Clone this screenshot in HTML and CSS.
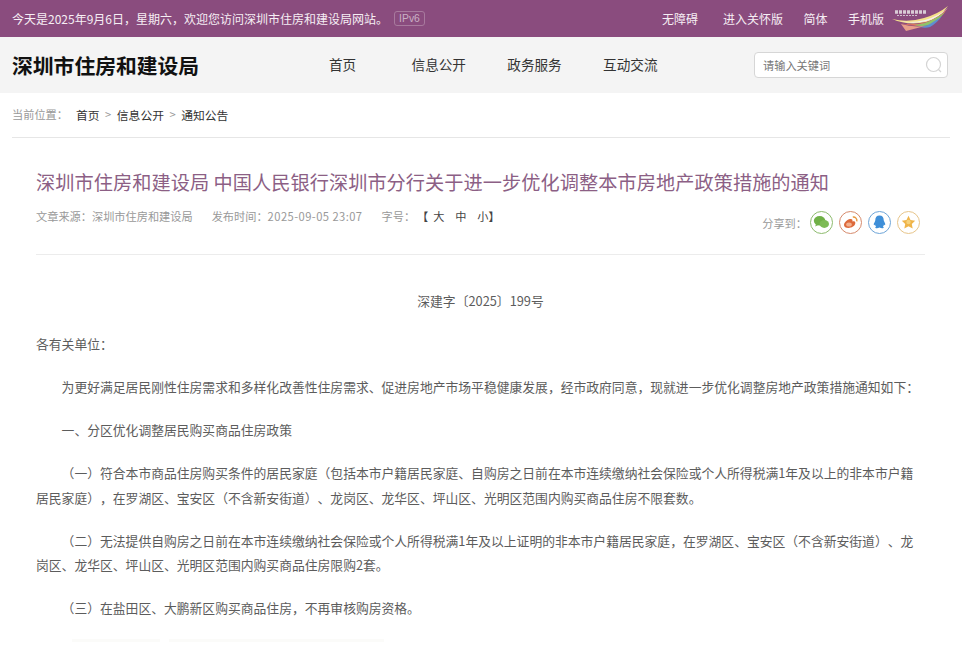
FILE: index.html
```html
<!DOCTYPE html>
<html lang="zh-CN">
<head>
<meta charset="utf-8">
<title>深圳市住房和建设局</title>
<link rel="stylesheet" href="styles.css">
</head>
<body>
<div class="topbar">
  <div class="welcome"><span>今天是2025年9月6日，星期六，欢迎您访问深圳市住房和建设局网站。</span><span class="ipv6">IPv6</span></div>
  <div class="toplinks">
    <a>无障碍</a><a>进入关怀版</a><a>简体</a><a>手机版</a>
    <svg class="wing" width="57" height="27" viewBox="0 0 57 27">
      <path d="M3 7h31" stroke="#d9cbd6" stroke-width="3.500" stroke-dasharray="3 1"/>
      <path d="M5 10.500h20" stroke="#cfc0cd" stroke-width="1" stroke-dasharray="2 1"/>
      <path d="M0 14 Q16 18 32 13 Q46 9 56 1 Q48 13 34 17 Q16 21 0 14Z" fill="#f4e08a"/>
      <path d="M3 15 Q17 19 33 15 Q47 11 56 3 Q48 12 35 16 Q20 20 3 15Z" fill="#f2f0f0"/>
      <path d="M7 18 Q20 21 35 17 Q46 13 55 4 Q49 14 37 19 Q24 23 7 18Z" fill="#e5745f"/>
      <path d="M22 20 Q33 19 40 15 Q48 11 53 7 Q47 15 38 20 Q30 22 22 20Z" fill="#8fc46a"/>
      <path d="M28 22 Q36 21 41 17 Q46 14 50 11 Q45 18 38 22 Q33 23.500 28 22Z" fill="#5f8fd0"/>
      <path d="M9 19 L14 26 L33 21 Q20 22.500 9 19Z" fill="#e8a08a"/>
    </svg>
  </div>
</div>
<header class="mainhead">
  <div class="site">深圳市住房和建设局</div>
  <nav class="nav"><a>首页</a><a>信息公开</a><a>政务服务</a><a>互动交流</a></nav>
  <div class="search">
    <span>请输入关键词</span>
    <svg width="18" height="18" viewBox="0 0 18 18"><circle cx="8.500" cy="8.500" r="7" fill="none" stroke="#d4d4d4" stroke-width="1.200"/><path d="M13.500 13.500l2.500 2.500" stroke="#d4d4d4" stroke-width="1.200"/></svg>
  </div>
</header>
<div class="crumbs">
  <span class="here">当前位置：</span><a>首页</a><i>&gt;</i><a>信息公开</a><i>&gt;</i><a>通知公告</a>
</div>
<main class="article">
  <h1>深圳市住房和建设局 中国人民银行深圳市分行关于进一步优化调整本市房地产政策措施的通知</h1>
  <div class="meta">
    <div class="info">
      <span>文章来源：深圳市住房和建设局</span>
      <span>发布时间：<span class="date">2025-09-05 23:07</span></span>
      <span class="sizeline">字号：<span class="sizes"><b class="open">【</b><b>大</b><b>中</b><b>小</b><b class="close">】</b></span></span>
    </div>
    <div class="share">
      <span>分享到：</span>
      <a class="ic green"><svg width="17" height="17" viewBox="0 0 17 17"><ellipse cx="6.600" cy="6.800" rx="5.800" ry="4.800" fill="#6fb046"/><path d="M3 10l-.8 2.500 3-1.500z" fill="#6fb046"/><ellipse cx="11.300" cy="10" rx="4.700" ry="3.900" fill="#7dbb55"/></svg></a>
      <a class="ic red"><svg width="17" height="17" viewBox="0 0 17 17"><path d="M2 11c0-2.500 3.200-5.500 6-6 2.500-.4 2.800 1.200 2.300 2.500 1.800-.5 3.200.1 3 1.800-.3 2.700-3.700 4.700-6.800 4.700C3.800 14 2 12.800 2 11z" fill="#dd6a3c"/><ellipse cx="7" cy="10.500" rx="2.800" ry="2" fill="#f3b18f"/><path d="M10.800 3a3.600 3.600 0 0 1 4 4.400" fill="none" stroke="#e9973d" stroke-width="1.400"/></svg></a>
      <a class="ic blue"><svg width="17" height="17" viewBox="0 0 17 17"><path d="M8.500 1.500c2.900 0 4.200 2.100 4.200 4.500 0 1 .9 2 1.400 3.600.4 1.600-.3 2.100-1.200 1 0 .9-.4 1.600-1 2.100.9.300 1.100 1 .5 1.300-1.100.4-2.600.2-3.900-.4-1.300.6-2.800.8-3.900.4-.6-.3-.4-1 .5-1.300-.6-.5-1-1.200-1-2.100-.9 1.100-1.600.6-1.200-1C3.800 8 4.300 7 4.300 6c0-2.400 1.300-4.500 4.200-4.500z" fill="#3f8fd8"/></svg></a>
      <a class="ic gold"><svg width="17" height="17" viewBox="0 0 17 17"><path d="M8.500 1.800l2 4.300 4.700.6-3.400 3.200.9 4.600-4.200-2.300-4.200 2.300.9-4.600L1.800 6.700l4.700-.6z" fill="#efb449"/><circle cx="8.500" cy="8" r="2.200" fill="#f6d27c"/></svg></a>
    </div>
  </div>
  <div class="body">
    <p class="center">深建字〔2025〕199号</p>
    <p>各有关单位：</p>
    <p class="ind">为更好满足居民刚性住房需求和多样化改善性住房需求、促进房地产市场平稳健康发展，经市政府同意，现就进一步优化调整房地产政策措施通知如下：</p>
    <p class="ind">一、分区优化调整居民购买商品住房政策</p>
    <p class="ind">（一）符合本市商品住房购买条件的居民家庭（包括本市户籍居民家庭、自购房之日前在本市连续缴纳社会保险或个人所得税满1年及以上的非本市户籍居民家庭），在罗湖区、宝安区（不含新安街道）、龙岗区、龙华区、坪山区、光明区范围内购买商品住房不限套数。</p>
    <p class="ind">（二）无法提供自购房之日前在本市连续缴纳社会保险或个人所得税满1年及以上证明的非本市户籍居民家庭，在罗湖区、宝安区（不含新安街道）、龙岗区、龙华区、坪山区、光明区范围内购买商品住房限购2套。</p>
    <p class="ind">（三）在盐田区、大鹏新区购买商品住房，不再审核购房资格。</p>
    <div class="trace"><span></span><span></span></div>
  </div>
</main>
</body>
</html>
```
FILE: styles.css
```css
* { box-sizing: border-box; }
html, body { margin: 0; padding: 0; height: 645px; overflow: hidden; background: #fff; }
body { font-family: "Noto Sans CJK SC", "Microsoft YaHei", sans-serif; color: #555; font-size: 12.8px; text-spacing-trim: space-all; }
.topbar { height: 37px; background: #8a4c7e; color: #f6eef4; display: flex; justify-content: space-between; align-items: center; padding: 0 13px 0 12px; font-size: 12px; }
.welcome { display: flex; align-items: center; }
.ipv6 { margin-left: 6px; width: 31px; text-align: center; border: 1px solid #a87a9e; border-radius: 3px; font-family: "Liberation Sans", sans-serif; font-size: 10.4px; line-height: 13px; color: #c9b0c4; }
.toplinks { display: flex; align-items: center; }
.toplinks a:nth-child(2) { margin-left: 25px; }
.toplinks a:nth-child(3), .toplinks a:nth-child(4) { margin-left: 20.500px; }
.wing { margin-left: 8px; }
.mainhead { height: 56px; background: #f4f4f4; display: flex; align-items: center; padding: 0 14px 0 12px; }
.site { font-size: 20.800px; font-weight: 700; color: #111; width: 317px; }
.nav { display: flex; gap: 41.400px; font-size: 13.600px; color: #333; flex: 1; margin-top: -2px; }
.nav a:first-child { margin-right: 14px; }
.search { width: 194px; height: 26px; background: #fff; border: 1px solid #d6d6d6; border-radius: 4px; display: flex; justify-content: space-between; align-items: center; padding: 0 4px 0 8px; font-size: 11.200px; color: #777; }
.crumbs { margin: 0 12px; height: 45px; padding-bottom: 2px; border-bottom: 1px solid #e6e6e6; display: flex; align-items: center; font-size: 11.800px; color: #333; }
.here { color: #999; font-size: 11.200px; margin-right: 8px; }
.crumbs i { font-style: normal; font-size: 11.200px; color: #999; margin: 0 5.500px; }
.article { padding: 0 37px 0 36px; }
h1 { margin: 0; padding-top: 31px; font-size: 19.200px; line-height: 26px; font-weight: 400; color: #8c5f85; letter-spacing: .05px; }
.meta { display: flex; justify-content: space-between; height: 60px; border-bottom: 1px solid #ececec; font-size: 11.200px; color: #999; }
.info { display: flex; gap: 19px; padding-top: 13px; line-height: 16px; }
.date { letter-spacing: .44px; }
.sizeline { display: flex; }
.sizes { display: flex; margin-left: 2px; color: #444; }
.sizes b { font-weight: 400; margin-right: 10.800px; }
.sizes .open { margin-right: 5px; }
.sizes .close { margin-left: -10.800px; margin-right: 0; }
.share { display: flex; align-items: flex-start; gap: 6px; padding: 16px 5px 0 0; }
.share span { line-height: 24px; margin-right: -3px; }
.ic { width: 23px; height: 23px; border-radius: 50%; border: 1px solid; display: flex; align-items: center; justify-content: center; }
.green { border-color: #8dbb6d; }
.red { border-color: #d68a6c; }
.blue { border-color: #6ea5d8; }
.gold { border-color: #e7c58a; }
.body { padding-top: 34px; font-size: 12.800px; line-height: 24.500px; color: #5c5c5c; }
.body p { margin: 0 0 18.500px; }
.center { text-align: center; }
.ind { text-indent: 2em; }
.trace { display: flex; gap: 9px; height: 3px; margin: 1px 0 0 36px; }
.trace span { background: #fbfbf9; }
.trace span:first-child { width: 88px; }
.trace span:last-child { width: 215px; }
```
